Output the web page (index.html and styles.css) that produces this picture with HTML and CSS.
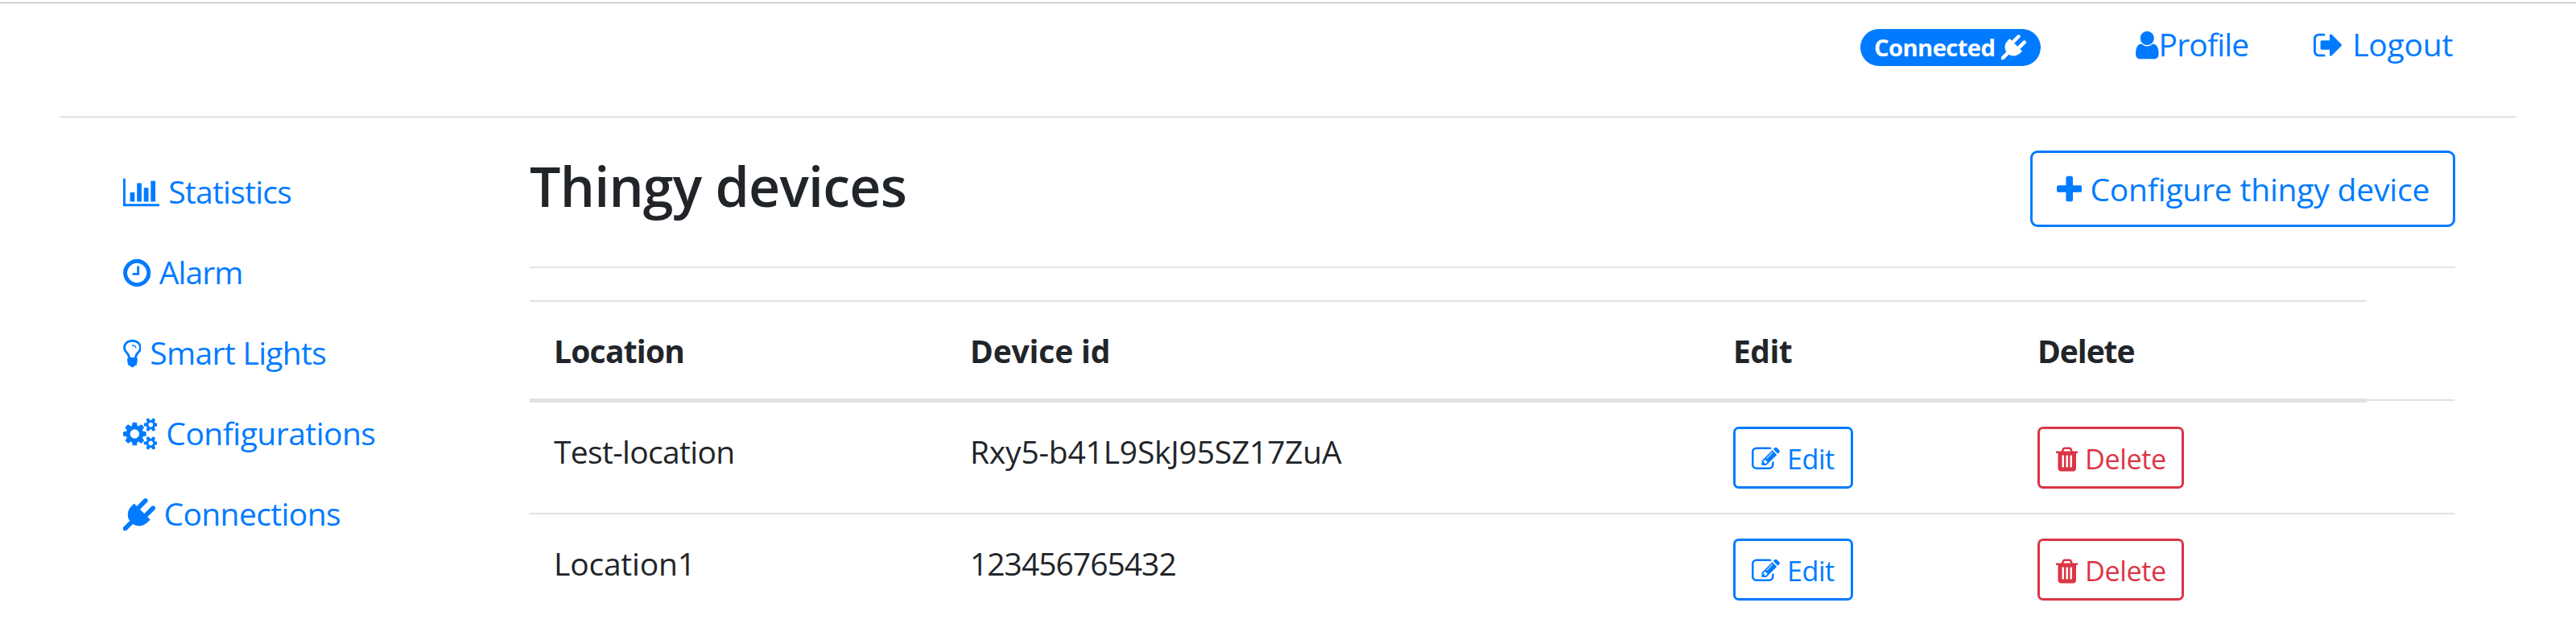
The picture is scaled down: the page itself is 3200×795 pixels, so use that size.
FILE: index.html
```
<!DOCTYPE html>
<html lang="en">
<head>
<meta charset="utf-8">
<title>Thingy devices</title>
<link rel="stylesheet" href="styles.css">
</head>
<body>
<svg class="sprite" aria-hidden="true">
  <symbol id="plug" viewBox="0 0 1792 1792"><path d="M1755 453q37 38 37 90.5t-37 90.5l-401 400 150 150-160 160q-163 163-389.500 186.500t-411.500-100.500l-362 362h-181v-181l362-362q-124-185-100.500-411.500t186.500-389.500l160-160 150 150 400-401q38-37 91-37t90 37 37 90.500-37 90.500l-400 401 234 234 401-400q38-37 91-37t90 37z"/></symbol>
  <symbol id="pencil" viewBox="0 0 1792 1792"><path d="M888 1184l116-116-152-152-116 116v56h96v96h56zm440-720q-16-16-33 1l-350 350q-17 17-1 33t33-1l350-350q17-17 1-33zm80 594v190q0 119-84.500 203.500t-203.500 84.500h-832q-119 0-203.500-84.500t-84.500-203.500v-832q0-119 84.500-203.500t203.500-84.500h832q63 0 117 25 15 7 18 23 3 17-9 29l-49 49q-14 14-32 8-23-6-45-6h-832q-66 0-113 47t-47 113v832q0 66 47 113t113 47h832q66 0 113-47t47-113v-126q0-13 9-22l64-64q15-15 35-7t20 29zm-96-738l288 288-672 672h-288v-288zm444 132l-92 92-288-288 92-92q28-28 68-28t68 28l152 152q28 28 28 68t-28 68z"/></symbol>
  <symbol id="trash" viewBox="192 0 1408 1792"><path d="M704 1376v-704q0-14-9-23t-23-9h-64q-14 0-23 9t-9 23v704q0 14 9 23t23 9h64q14 0 23-9t9-23zm256 0v-704q0-14-9-23t-23-9h-64q-14 0-23 9t-9 23v704q0 14 9 23t23 9h64q14 0 23-9t9-23zm256 0v-704q0-14-9-23t-23-9h-64q-14 0-23 9t-9 23v704q0 14 9 23t23 9h64q14 0 23-9t9-23zm-544-992h448l-48-117q-7-9-17-11h-317q-10 2-17 11zm928 32v64q0 14-9 23t-23 9h-96v948q0 83-47 143.500t-113 60.500h-832q-66 0-113-58.500t-47-141.500v-952h-96q-14 0-23-9t-9-23v-64q0-14 9-23t23-9h309l70-167q15-37 54-63t79-26h320q40 0 79 26t54 63l70 167h309q14 0 23 9t9 23z"/></symbol>
</svg>
<div class="page">
  <header class="topbar">
    <span class="badge"><span class="badge-text">Connected</span><svg class="icon-badge"><use href="#plug"/></svg></span>
    <a class="link profile"><svg class="icon w-user" viewBox="256 0 1280 1792"><path d="M1536 1399q0 109-62.500 187t-150.500 78h-854q-88 0-150.500-78t-62.500-187q0-85 8.500-160.500t31.500-152 58.500-131 94-89 134.500-34.500q131 128 313 128t313-128q76 0 134.500 34.500t94 89 58.500 131 31.500 152 8.500 160.500zm-256-887q0 159-112.500 271.500t-271.500 112.500-271.500-112.500-112.500-271.500 112.500-271.500 271.500-112.500 271.500 112.500 112.500 271.500z"/></svg><span class="t-profile">Profile</span></a>
    <a class="link logout"><svg class="icon gap w-out" viewBox="64 0 1664 1792"><path d="M704 1440q0 4 1 20t.5 26.500-3 23.500-10 19.500-20.500 6.500h-320q-119 0-203.500-84.500t-84.500-203.500v-704q0-119 84.500-203.500t203.500-84.500h320q13 0 22.500 9.500t9.500 22.500q0 4 1 20t.5 26.500-3 23.500-10 19.500-20.500 6.500h-320q-66 0-113 47t-47 113v704q0 66 47 113t113 47h312l11.500 1 11.500 3 8 5.500 7 9 2 13.500zm928-544q0 26-19 45l-544 544q-19 19-45 19t-45-19-19-45v-288h-448q-26 0-45-19t-19-45v-384q0-26 19-45t45-19h448v-288q0-26 19-45t45-19 45 19l544 544q19 19 19 45z"/></svg><span class="t-logout">Logout</span></a>
  </header>
  <div class="rule-top"></div>
  <div class="main">
    <nav class="sidebar">
      <a class="link item"><svg class="icon gap w-chart" viewBox="0 0 2048 1792"><path d="M640 896v512h-256v-512h256zm384-512v1024h-256v-1024h256zm1024 1152v128h-2048v-1536h128v1408h1920zm-640-896v768h-256v-768h256zm384-384v1152h-256v-1152h256z"/></svg><span class="t-stat">Statistics</span></a>
      <a class="link item"><svg class="icon gap w-clock" viewBox="128 0 1536 1792"><path d="M1024 544v448q0 14-9 23t-23 9h-320q-14 0-23-9t-9-23v-64q0-14 9-23t23-9h224v-352q0-14 9-23t23-9h64q14 0 23 9t9 23zm416 352q0-148-73-273t-198-198-273-73-273 73-198 198-73 273 73 273 198 198 273 73 273-73 198-198 73-273zm224 0q0 209-103 385.500t-279.500 279.500-385.500 103-385.500-103-279.500-279.500-103-385.500 103-385.500 279.500-279.500 385.500-103 385.500 103 279.500 279.500 103 385.500z"/></svg><span class="t-alarm">Alarm</span></a>
      <a class="link item"><svg class="icon gap w-bulb" viewBox="384 0 1024 1792"><path d="M1120 576q0 13-9.500 22.500t-22.500 9.500-22.500-9.500-9.500-22.500q0-46-54-71t-106-25q-13 0-22.500-9.500t-9.500-22.500 9.500-22.500 22.500-9.500q50 0 99.500 16t87 54 37.500 90zm160 0q0-72-34.500-134t-90-101.500-123-62-136.500-22.500-136.500 22.500-123 62-90 101.500-34.500 134q0 101 68 180 10 11 30.500 33t30.500 33q128 153 141 298h228q13-145 141-298 10-11 30.500-33t30.500-33q68-79 68-180zm128 0q0 155-103 268-45 49-74.500 87t-59.500 95.500-34 107.500q47 28 47 82 0 37-25 64 25 27 25 64 0 52-45 81 13 23 13 47 0 46-31.500 71t-77.500 25q-20 44-60 70t-87 26-87-26-60-70q-46 0-77.500-25t-31.500-71q0-24 13-47-45-29-45-81 0-37 25-64-25-27-25-64 0-54 47-82-4-50-34-107.500t-59.500-95.500-74.500-87q-103-113-103-268 0-99 44.500-184.500t117-142 164-89 186.500-32.500 186.500 32.500 164 89 117 142 44.500 184.500z"/></svg><span class="t-lights">Smart Lights</span></a>
      <a class="link item"><svg class="icon gap w-cogs" viewBox="-64 0 1920 1792"><path d="M832 896q0-106-75-181t-181-75-181 75-75 181 75 181 181 75 181-75 75-181zm768 512q0-52-38-90t-90-38-90 38-38 90q0 53 37.500 90.500t90.500 37.500 90.500-37.500 37.500-90.500zm0-1024q0-52-38-90t-90-38-90 38-38 90q0 53 37.500 90.500t90.500 37.500 90.500-37.500 37.500-90.500zm-384 421v185q0 10-7 19.500t-16 10.500l-155 24q-11 35-32 76 34 48 90 115 7 11 7 20 0 12-7 19-23 30-82.500 89.500t-78.500 59.500q-11 0-21-7l-115-90q-37 19-77 31-11 108-23 155-7 24-30 24h-186q-11 0-20-7.500t-10-17.500l-23-153q-34-10-75-31l-118 89q-7 7-20 7-11 0-21-8-144-133-144-160 0-9 7-19 10-14 41-53t47-61q-23-44-35-82l-152-24q-10-1-17-9.500t-7-19.500v-185q0-10 7-19.500t16-10.500l155-24q11-35 32-76-34-48-90-115-7-11-7-20 0-12 7-20 22-30 82-89t79-59q11 0 21 7l115 90q34-18 77-32 11-108 23-154 7-24 30-24h186q11 0 20 7.500t10 17.500l23 153q34 10 75 31l118-89q8-7 20-7 11 0 21 8 144 133 144 160 0 8-7 19-12 16-42 54t-45 60q23 48 34 82l152 23q10 2 17 10.500t7 19.500zm640 533v140q0 16-149 31-12 27-30 52 51 113 51 138 0 4-4 7-122 71-124 71-8 0-46-47t-52-68q-20 2-30 2t-30-2q-14 21-52 68t-46 47q-2 0-124-71-4-3-4-7 0-25 51-138-18-25-30-52-149-15-149-31v-140q0-16 149-31 13-29 30-52-51-113-51-138 0-4 4-7 4-2 35-20t59-34 30-16q8 0 46 46.500t52 67.500q20-2 30-2t30 2q51-71 92-112l6-2q4 0 124 70 4 3 4 7 0 25-51 138 17 23 30 52 149 15 149 31zm0-1024v140q0 16-149 31-12 27-30 52 51 113 51 138 0 4-4 7-122 71-124 71-8 0-46-47t-52-68q-20 2-30 2t-30-2q-14 21-52 68t-46 47q-2 0-124-71-4-3-4-7 0-25 51-138-18-25-30-52-149-15-149-31v-140q0-16 149-31 13-29 30-52-51-113-51-138 0-4 4-7 4-2 35-20t59-34 30-16q8 0 46 46.500t52 67.500q20-2 30-2t30 2q51-71 92-112l6-2q4 0 124 70 4 3 4 7 0 25-51 138 17 23 30 52 149 15 149 31z"/></svg><span class="t-config">Configurations</span></a>
      <a class="link item"><svg class="icon gap w-plug"><use href="#plug"/></svg><span class="t-conn">Connections</span></a>
    </nav>
    <main class="content">
      <div class="title-row">
        <h1 class="title">Thingy devices</h1>
        <a class="btn-configure"><svg class="icon w-plus" viewBox="192 0 1408 1792"><path d="M1600 736v192q0 40-28 68t-68 28h-416v416q0 40-28 68t-68 28h-192q-40 0-68-28t-28-68v-416h-416q-40 0-68-28t-28-68v-192q0-40 28-68t68-28h416v-416q0-40 28-68t68-28h192q40 0 68 28t28 68v416h416q40 0 68 28t28 68z"/></svg><span class="t-configure">Configure thingy device</span></a>
      </div>
      <div class="rule"></div>
      <table class="devices">
        <colgroup><col class="c1"><col class="c2"><col class="c3"><col class="c4"><col class="c5"></colgroup>
        <thead>
          <tr>
            <th class="h-location">Location</th>
            <th class="h-device">Device id</th>
            <th class="h-edit">Edit</th>
            <th class="h-delete">Delete</th>
            <td class="spare"><div class="spare-line"></div></td>
          </tr>
        </thead>
        <tbody>
          <tr>
            <td class="d-test">Test-location</td>
            <td class="d-rxy">Rxy5-b41L9SkJ95SZ17ZuA</td>
            <td><a class="btn btn-edit"><svg class="icon-sm w-pencil"><use href="#pencil"/></svg><span class="t-edit">Edit</span></a></td>
            <td><a class="btn btn-delete"><svg class="icon-sm w-trash"><use href="#trash"/></svg><span class="t-delete">Delete</span></a></td>
            <td></td>
          </tr>
          <tr>
            <td class="d-loc1">Location1</td>
            <td class="d-num">123456765432</td>
            <td><a class="btn btn-edit"><svg class="icon-sm w-pencil"><use href="#pencil"/></svg><span class="t-edit">Edit</span></a></td>
            <td><a class="btn btn-delete"><svg class="icon-sm w-trash"><use href="#trash"/></svg><span class="t-delete">Delete</span></a></td>
            <td></td>
          </tr>
        </tbody>
      </table>
    </main>
  </div>
</div>
</body>
</html>
```
FILE: styles.css
```
* { box-sizing: border-box; }
html { overflow: hidden; }
body {
  margin: 0;
  padding-top: 3px;
  background: #fff;
  color: #212529;
  font: 39px/60px "Open Sans", "Noto Sans", sans-serif;
}
.sprite { display: none; }
.page { border-top: 1px solid #b0b0b0; padding: 0 75px; height: 792px; overflow: hidden; }

.topbar { display: flex; align-items: flex-start; justify-content: flex-end; height: 140px; padding-top: 21px; }
.link { color: #007bff; white-space: nowrap; display: block; }
.profile { width: 221px; }
.logout { width: 251px; }
.badge {
  width: 224px;
  height: 46px;
  margin: 11px 118px 0 0;
  padding-left: 17px;
  border-radius: 23px;
  background: #007bff;
  color: #fff;
  font-size: 29.3px;
  font-weight: 700;
  line-height: 46px;
  white-space: nowrap;
}
.badge-text { letter-spacing: -.66px; }

svg { fill: currentColor; }
.icon { height: 40px; vertical-align: -5.7px; }
.icon-sm { height: 35px; vertical-align: -5px; margin-right: 9px; }
.icon-badge { width: 31px; height: 31px; vertical-align: -4.4px; margin-left: 8px; }
.gap { margin-right: 11px; }
.w-user { width: 28.57px; }
.w-out { width: 37.14px; }
.w-chart { width: 45.71px; }
.w-clock { width: 34.29px; }
.w-bulb { width: 22.86px; }
.w-cogs { width: 42.86px; }
.w-plug { width: 40px; }
.w-plus { width: 31.43px; margin-right: 10px; }
.w-pencil { width: 35px; }
.w-trash { width: 27.5px; }

.rule-top { height: 3px; background: #e4e4e4; border-bottom: 1px solid #f1f1f1; }
.main { display: grid; grid-template-columns: 505.5px 2392px; padding-left: 77.5px; }
.sidebar { padding-top: 61px; }
.item { height: 100px; }

.content { padding-top: 40px; }
.title-row { display: flex; justify-content: space-between; align-items: flex-start; height: 95px; }
.title { margin: 2px 0 0; font-size: 68px; line-height: 84px; font-weight: 600; letter-spacing: -.73px; }
.btn-configure {
  width: 528px;
  height: 95px;
  padding: 1px 0 0 30px;
  border: 3px solid #007bff;
  border-radius: 9px;
  color: #007bff;
  line-height: 88px;
  white-space: nowrap;
}
.rule { height: 2px; margin: 49px 0 40px; background: #e5e5e5; }

.devices { width: 2391px; table-layout: fixed; border-collapse: separate; border-spacing: 0; line-height: 62px; }
.c1 { width: 517px; }
.c2 { width: 948px; }
.c3 { width: 378px; }
.c4 { width: 439px; }
.c5 { width: 109px; }
th {
  height: 127px;
  padding: 30px 30px 28px;
  border-top: 2px solid #dee2e6;
  border-bottom: 5px solid #dee2e6;
  text-align: left;
  font-weight: 700;
  vertical-align: top;
}
tbody td { height: 137px; padding: 30px 30px 0; vertical-align: top; }
tbody tr + tr td { height: 139px; border-top: 2px solid #dee2e6; }
tbody td:last-child { padding: 0; }
.spare { padding: 0 0 2px; vertical-align: bottom; }
.spare-line { height: 2px; background: #dee2e6; }

.btn {
  display: block;
  height: 77px;
  padding-top: 2px;
  border: 3px solid currentColor;
  border-radius: 7px;
  font-size: 34.2px;
  line-height: 69px;
  white-space: nowrap;
}
.btn-edit { width: 149px; padding-left: 20px; color: #007bff; }
.btn-delete { width: 182px; padding-left: 19.5px; color: #dc3545; }

.t-profile { letter-spacing: -.83px; }
.t-logout { letter-spacing: -.19px; }
.t-stat { letter-spacing: -.75px; }
.t-alarm { letter-spacing: -.9px; }
.t-lights { letter-spacing: -.67px; }
.t-config { letter-spacing: -.52px; }
.t-conn { letter-spacing: -.61px; }
.t-configure { letter-spacing: -.19px; }
.t-edit { letter-spacing: -.51px; }
.t-delete { letter-spacing: -.4px; }
.h-location { letter-spacing: -.78px; }
.h-device { letter-spacing: -.17px; }
.h-edit { letter-spacing: -.57px; }
.h-delete { letter-spacing: -1.06px; }
.d-test { letter-spacing: -.67px; }
.d-rxy { letter-spacing: -.21px; }
.d-loc1 { letter-spacing: -.2px; }
.d-num { letter-spacing: -.99px; }
```
